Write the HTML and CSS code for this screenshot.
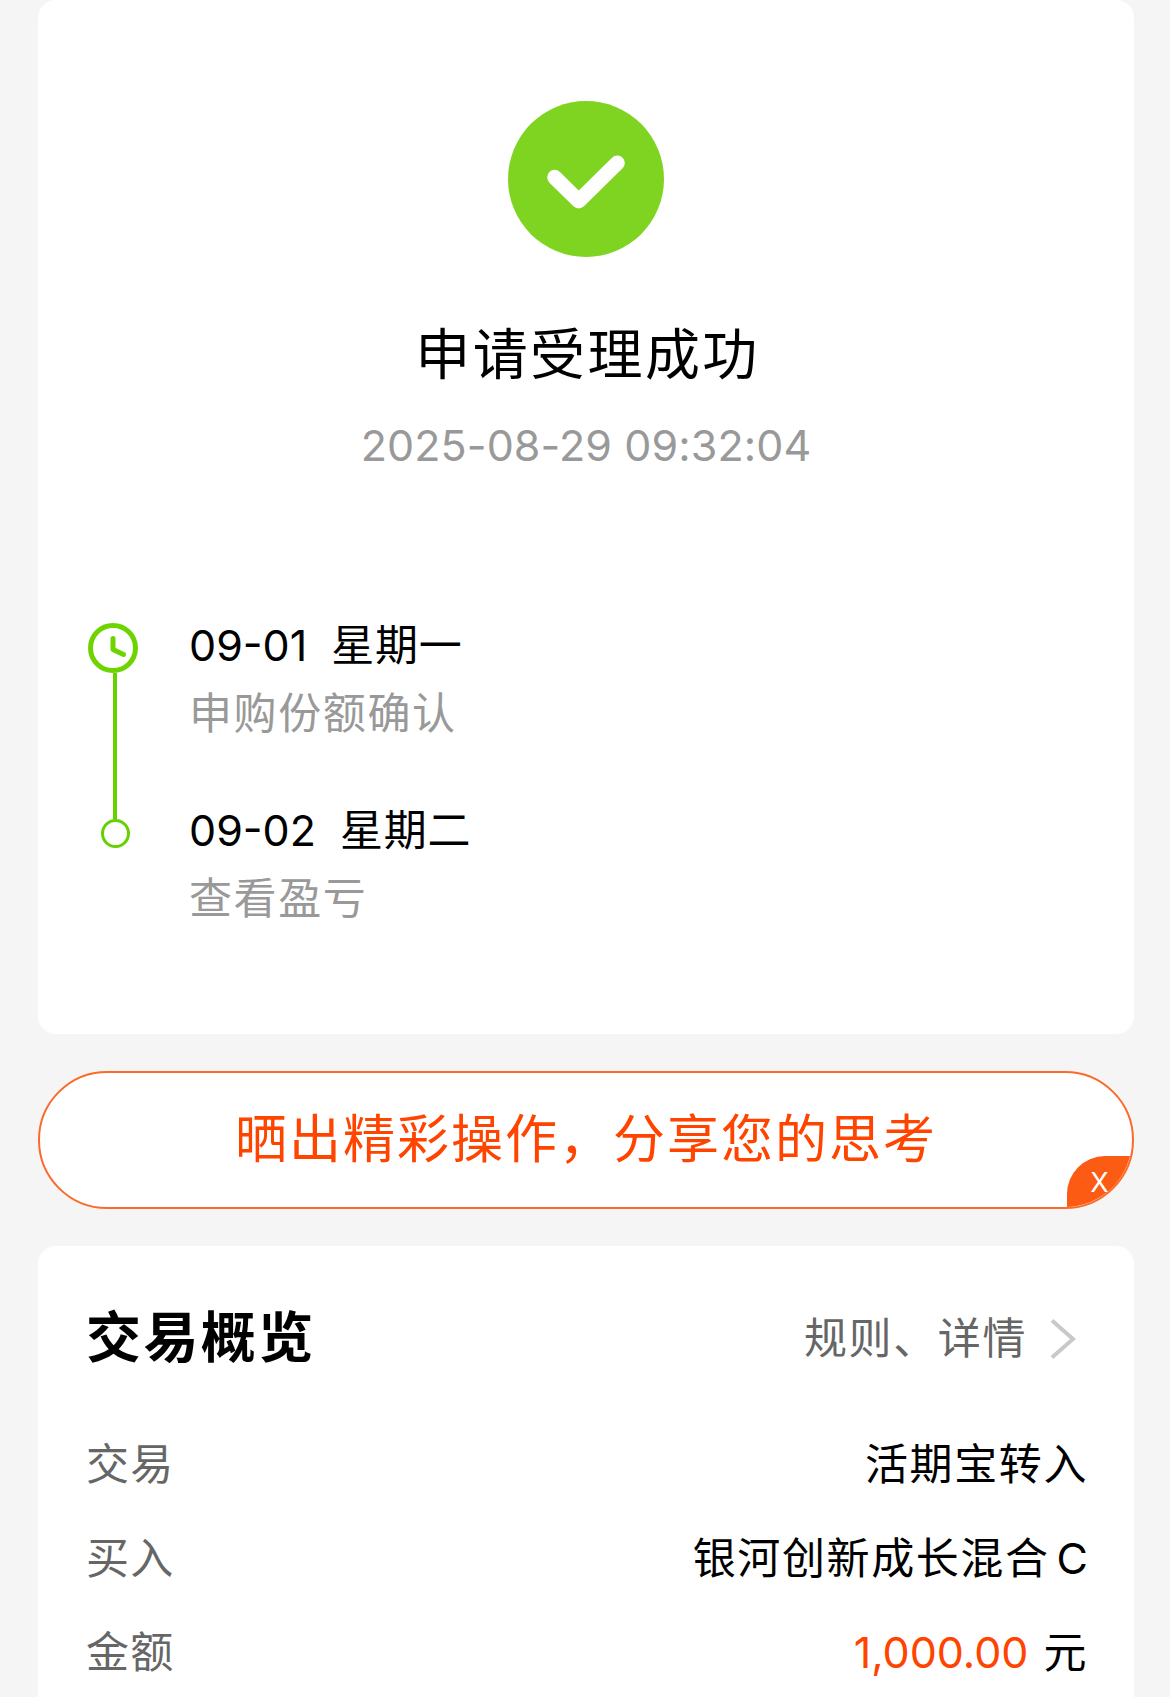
FILE: index.html
```
<!DOCTYPE html>
<html lang="zh-CN">
<head>
  <meta charset="UTF-8">
  <title>申请受理成功</title>
  <meta name="viewport" content="width=device-width, initial-scale=1.0">
  <link rel="stylesheet" href="styles.css">
</head>
<body>
  <div class="page">
    <!-- 受理结果 -->
    <div class="card result">
      <svg class="result-icon" viewBox="0 0 156 156" width="156" height="156">
        <circle cx="78" cy="78" r="78" fill="#7fd321"/>
        <path d="M46.7 76.3 L70.7 100 L109.3 62" fill="none" stroke="#fff" stroke-width="15" stroke-linecap="round" stroke-linejoin="round"/>
      </svg>
      <h1>申请受理成功</h1>
      <div class="result-time">2025-08-29 09:32:04</div>

      <div class="timeline">
        <div class="step">
          <div class="rail">
            <svg class="clock" viewBox="0 0 50 50" width="50" height="50">
              <circle cx="25" cy="25" r="22.5" fill="none" stroke="#6dd400" stroke-width="5"/>
              <path d="M25 15.5 V26.5 L35.5 31.5" fill="none" stroke="#6dd400" stroke-width="5" stroke-linecap="round" stroke-linejoin="round"/>
            </svg>
            <div class="line"></div>
          </div>
          <div class="step-text">
            <div class="step-date"><span>09-01</span><span class="weekday">星期一</span></div>
            <div class="step-desc">申购份额确认</div>
          </div>
        </div>
        <div class="step last">
          <div class="rail">
            <div class="line"></div>
            <div class="dot"></div>
          </div>
          <div class="step-text">
            <div class="step-date"><span>09-02</span><span class="weekday">星期二</span></div>
            <div class="step-desc">查看盈亏</div>
          </div>
        </div>
      </div>
    </div>

    <!-- 分享入口 -->
    <div class="share">
      <span class="share-text">晒出精彩操作，分享您的思考</span>
      <span class="share-close">X</span>
    </div>

    <!-- 交易概览 -->
    <div class="card overview">
      <div class="overview-head">
        <h2>交易概览</h2>
        <div class="more">
          <span>规则、详情</span>
          <svg class="arrow" viewBox="0 0 26 42" width="26" height="42">
            <path d="M2 2.5 L23 21 L2 39.5" fill="none" stroke="#c9c9c9" stroke-width="4"/>
          </svg>
        </div>
      </div>
      <div class="row">
        <span class="label">交易</span>
        <span class="value">活期宝转入</span>
      </div>
      <div class="row">
        <span class="label">买入</span>
        <span class="value">银河创新成长混合<span class="latin">C</span></span>
      </div>
      <div class="row">
        <span class="label">金额</span>
        <span class="value"><span class="amount">1,000.00</span>元</span>
      </div>
    </div>
  </div>
</body>
</html>
```
FILE: styles.css
```
* {
  box-sizing: border-box;
}

body {
  margin: 0;
  background-color: #f5f5f5;
  color: #000;
  font-family: Inter, "Noto Sans CJK SC", sans-serif;
  font-size: 43px;
}

.page {
  height: 1697px;
  padding: 0 36px 0 38px;
  overflow: hidden;
}

.card {
  background-color: #fff;
  border-radius: 18px;
}

.result {
  height: 1034px;
  padding-top: 101px;
}

.result-icon {
  display: block;
  margin: 0 auto;
}

h1 {
  margin: 57px 0 0;
  padding-left: 3px;
  font-size: 55px;
  font-weight: 400;
  line-height: 80px;
  letter-spacing: 2.4px;
  text-align: center;
}

.result-time {
  margin-top: 21px;
  color: #999;
  font-size: 43px;
  line-height: 60px;
  letter-spacing: 0.1px;
  text-align: center;
}

.timeline {
  margin-top: 136px;
  padding-left: 50px;
}

.step {
  display: flex;
  height: 185px;
}

.rail {
  display: flex;
  flex-direction: column;
  width: 101px;
  padding-top: 12px;
}

.last .rail {
  padding-top: 0;
}

.line {
  flex: 1;
  width: 4px;
  margin-left: 25px;
  background-color: #66d000;
}

.last .line {
  flex: none;
  height: 23px;
}

.dot {
  width: 29px;
  height: 29px;
  margin-left: 13px;
  border: 3px solid #66d000;
  border-radius: 50%;
}

.step-date,
.step-desc {
  line-height: 68px;
}

.weekday {
  margin-left: 24px;
  letter-spacing: 0.8px;
}

.step-desc {
  color: #999;
  letter-spacing: 1.6px;
}

.share {
  position: relative;
  height: 138px;
  margin: 37px 0;
  border: 2px solid #fc6a2a;
  border-radius: 69px;
  background-color: #fff;
  color: #ff4400;
  font-size: 52px;
  line-height: 134px;
  letter-spacing: 2px;
  text-align: center;
  overflow: hidden;
}

.share-close {
  position: absolute;
  right: -2px;
  bottom: -2px;
  width: 67px;
  height: 53px;
  padding-right: 2px;
  border-top-left-radius: 38px;
  background-color: #fc5b13;
  color: #fff;
  font-size: 27px;
  line-height: 53px;
  letter-spacing: 0;
}

.overview {
  height: 500px;
  padding: 42px 46px 0 48px;
}

.overview-head {
  display: flex;
  align-items: center;
  justify-content: space-between;
  height: 94px;
  margin-bottom: 32px;
}

h2 {
  margin: 0;
  padding-bottom: 4px;
  font-size: 55px;
  font-weight: 700;
  letter-spacing: 2.4px;
}

.more {
  display: flex;
  align-items: center;
  gap: 23px;
  margin-right: 12px;
  color: #666;
  letter-spacing: 1.6px;
}

.arrow {
  margin-top: 7px;
}

.row {
  display: flex;
  align-items: center;
  justify-content: space-between;
  height: 94px;
}

.label {
  color: #666;
  letter-spacing: 1.3px;
}

.value {
  letter-spacing: 1.6px;
}

.latin {
  margin-left: 7px;
  letter-spacing: 0;
}

.amount {
  margin-right: 15px;
  color: #ff4400;
  letter-spacing: 0;
}
```
